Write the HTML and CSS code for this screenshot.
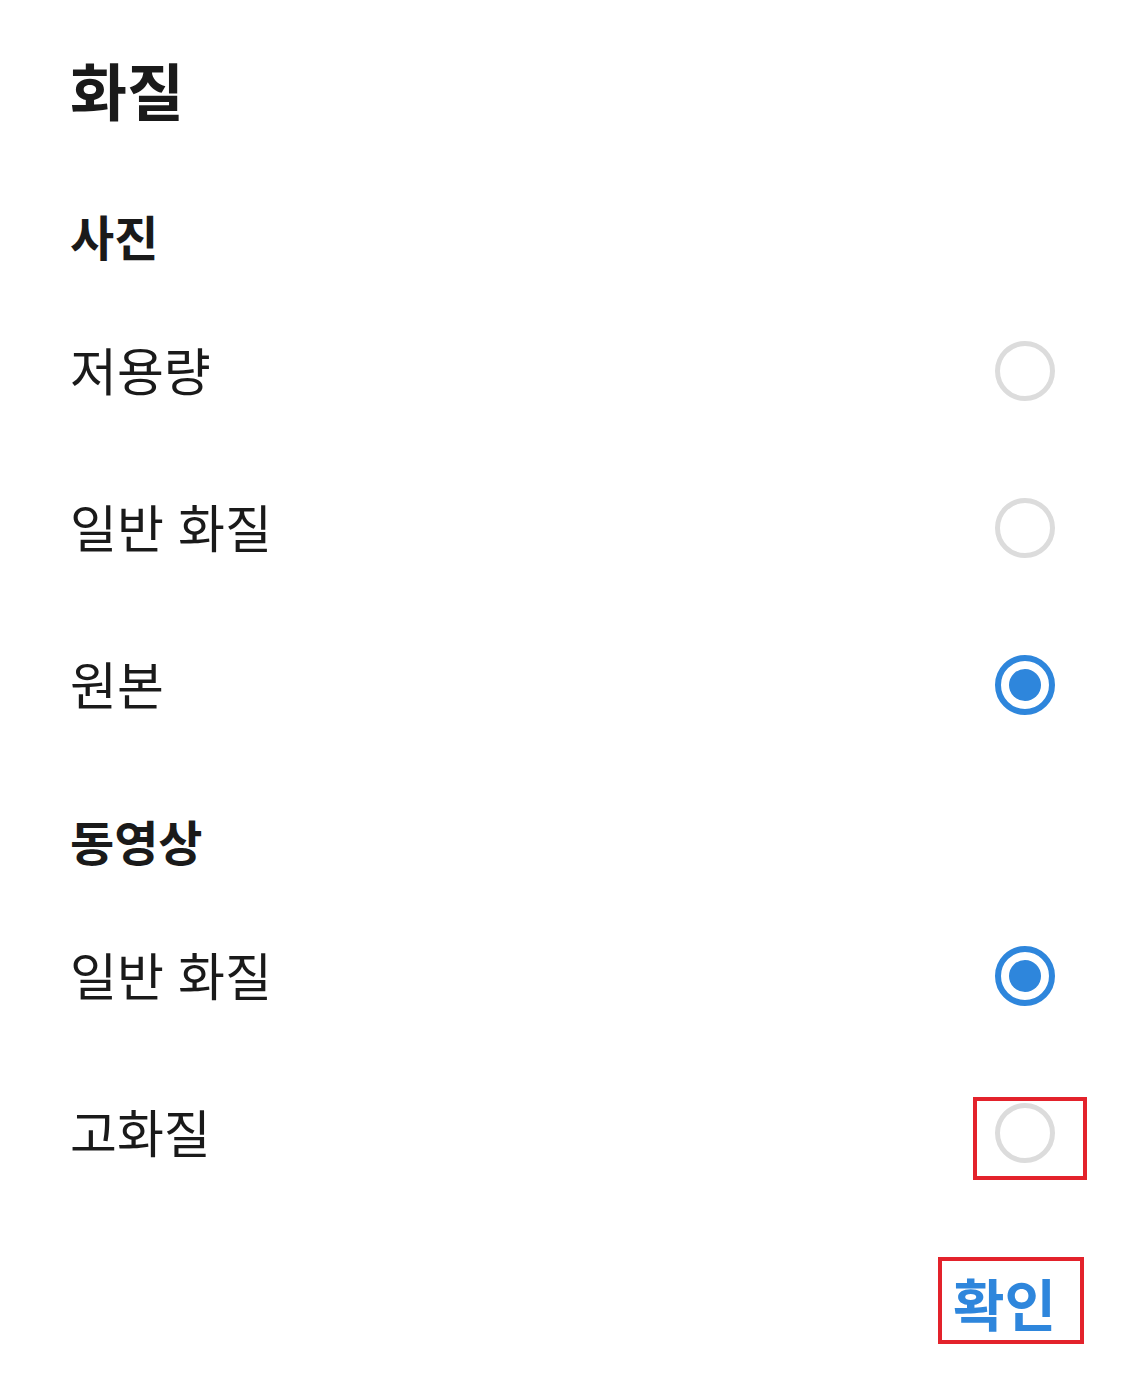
FILE: index.html
```html
<!DOCTYPE html>
<html lang="ko">
<head>
  <meta charset="UTF-8">
  <title>화질</title>
  <link rel="stylesheet" href="styles.css">
</head>
<body>

  <div class="sheet">
    <h1 class="title">화질</h1>

    <div class="section">
      <h2 class="section-title">사진</h2>
      <div class="option">
        <span class="label">저용량</span>
        <span class="radio"></span>
      </div>
      <div class="option">
        <span class="label">일반 화질</span>
        <span class="radio"></span>
      </div>
      <div class="option">
        <span class="label">원본</span>
        <span class="radio checked"></span>
      </div>
    </div>

    <div class="section video">
      <h2 class="section-title">동영상</h2>
      <div class="option">
        <span class="label">일반 화질</span>
        <span class="radio checked"></span>
      </div>
      <div class="option">
        <span class="label">고화질</span>
        <span class="radio marked"></span>
      </div>
    </div>

    <div class="actions">
      <button class="confirm">확인</button>
    </div>
  </div>

</body>
</html>
```

FILE: styles.css
```css
body {
  margin: 0;
  background: #fff;
  font-family: "Noto Sans CJK KR", "Noto Sans", sans-serif;
  color: #1a1a1a;
}
.sheet {
  padding: 0 0 0 70px;
}
.title {
  margin: 0;
  height: 178px;
  padding-bottom: 6px;
  display: flex;
  align-items: center;
  font-size: 62px;
  font-weight: 700;
}
.section-title {
  margin: 0;
  height: 102px;
  padding-bottom: 6px;
  display: flex;
  align-items: center;
  font-size: 48px;
  font-weight: 700;
}
.video {
  margin-top: 26px;
}
.option {
  height: 157px;
  display: flex;
  align-items: center;
  justify-content: space-between;
  padding-right: 71px;
}
.label {
  font-size: 51px;
  font-weight: 400;
  margin-bottom: 4px;
}
.radio {
  position: relative;
  width: 60px;
  height: 60px;
  box-sizing: border-box;
  border: 5px solid #dcdcdc;
  border-radius: 50%;
  display: flex;
  align-items: center;
  justify-content: center;
}
.radio.checked {
  border: 6px solid #2e86dc;
}
.radio.checked::before {
  content: "";
  width: 32px;
  height: 32px;
  border-radius: 50%;
  background: #2e86dc;
}
.radio.marked::after {
  content: "";
  position: absolute;
  left: -27px;
  top: -11px;
  width: 114px;
  height: 83px;
  box-sizing: border-box;
  border: 4px solid #e3222b;
}
.actions {
  display: flex;
  justify-content: flex-end;
  padding: 46px 42px 0 0;
}
.confirm {
  width: 146px;
  height: 87px;
  box-sizing: border-box;
  border: 4px solid #e3222b;
  background: #fff;
  padding: 0 20px 8px 11px;
  font-family: "Noto Sans CJK KR", "Noto Sans", sans-serif;
  font-size: 56px;
  font-weight: 700;
  color: #2e86dc;
  text-align: left;
  white-space: nowrap;
  cursor: pointer;
}
```
